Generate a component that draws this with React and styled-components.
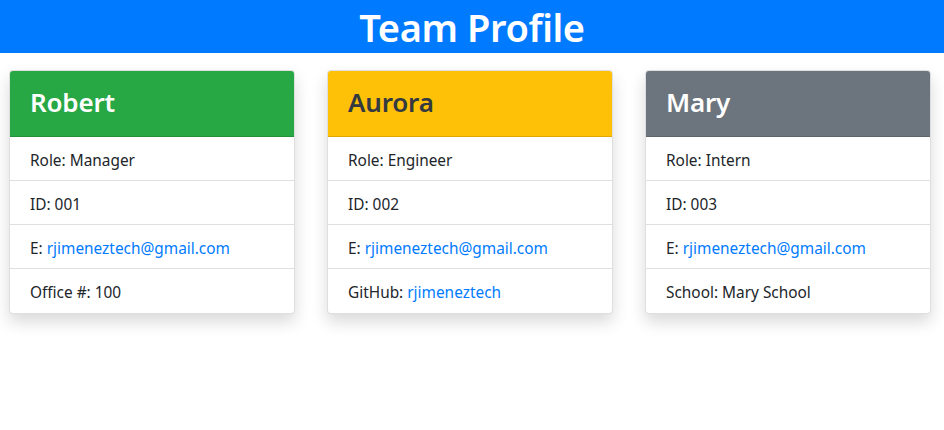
import React from "react";
import styled, { createGlobalStyle } from "styled-components";

const Global = createGlobalStyle`
  html, body {
    margin: 0;
    min-height: 100vh;
    background: #fff;
    font-family: "Noto Sans", "Open Sans", sans-serif;
    color: #212529;
  }
`;

const Banner = styled.header`
  background: #007bff;
  height: 53px;
  display: flex;
  align-items: center;
  justify-content: center;
  h1 {
    margin: 0;
    color: #fff;
    font-size: 38px;
    font-weight: 600;
    line-height: 1;
    letter-spacing: -0.4px;
  }
`;

const Row = styled.main`
  display: grid;
  grid-template-columns: repeat(3, 286px);
  gap: 32px;
  padding: 17px 0 40px 9px;
`;

const Card = styled.section`
  background: #fff;
  border: 1px solid rgba(0, 0, 0, 0.125);
  border-radius: 4px;
  box-shadow: 0 8px 16px rgba(0, 0, 0, 0.15);
  overflow: hidden;
`;

const CardHead = styled.div`
  background: ${(p) => p.bg};
  color: ${(p) => p.fg};
  height: 66px;
  box-sizing: border-box;
  padding: 0 20px 4px;
  display: flex;
  align-items: center;
  border-bottom: 1px solid rgba(0, 0, 0, 0.125);
  h2 {
    margin: 0;
    font-size: 26px;
    font-weight: 600;
    letter-spacing: -0.2px;
  }
`;

const Item = styled.div`
  height: 44px;
  box-sizing: border-box;
  padding: 3px 20px 0;
  display: flex;
  align-items: center;
  font-size: 15.4px;
  border-bottom: 1px solid rgba(0, 0, 0, 0.125);
  &:last-child {
    border-bottom: 0;
  }
  a {
    color: #007bff;
    text-decoration: none;
    margin-left: 4px;
  }
`;

const Value = styled.span`
  margin-left: 4px;
`;

const team = [
  { name: "Robert", role: "Manager", id: "001", bg: "#28a745", fg: "#fff", extra: ["Office #:", "100"] },
  { name: "Aurora", role: "Engineer", id: "002", bg: "#ffc107", fg: "#343a40", extra: ["GitHub:", "rjimeneztech", true] },
  { name: "Mary", role: "Intern", id: "003", bg: "#6c757d", fg: "#fff", extra: ["School:", "Mary School"] },
];

export default function App() {
  return (
    <>
      <Global />
      <Banner>
        <h1>Team Profile</h1>
      </Banner>
      <Row>
        {team.map((m) => (
          <Card key={m.id}>
            <CardHead bg={m.bg} fg={m.fg}>
              <h2>{m.name}</h2>
            </CardHead>
            <Item>Role: {m.role}</Item>
            <Item>ID: {m.id}</Item>
            <Item>
              E:<a href="#">rjimeneztech@gmail.com</a>
            </Item>
            <Item>
              {m.extra[0]}
              {m.extra[2] ? <a href="#">{m.extra[1]}</a> : <Value>{m.extra[1]}</Value>}
            </Item>
          </Card>
        ))}
      </Row>
    </>
  );
}
